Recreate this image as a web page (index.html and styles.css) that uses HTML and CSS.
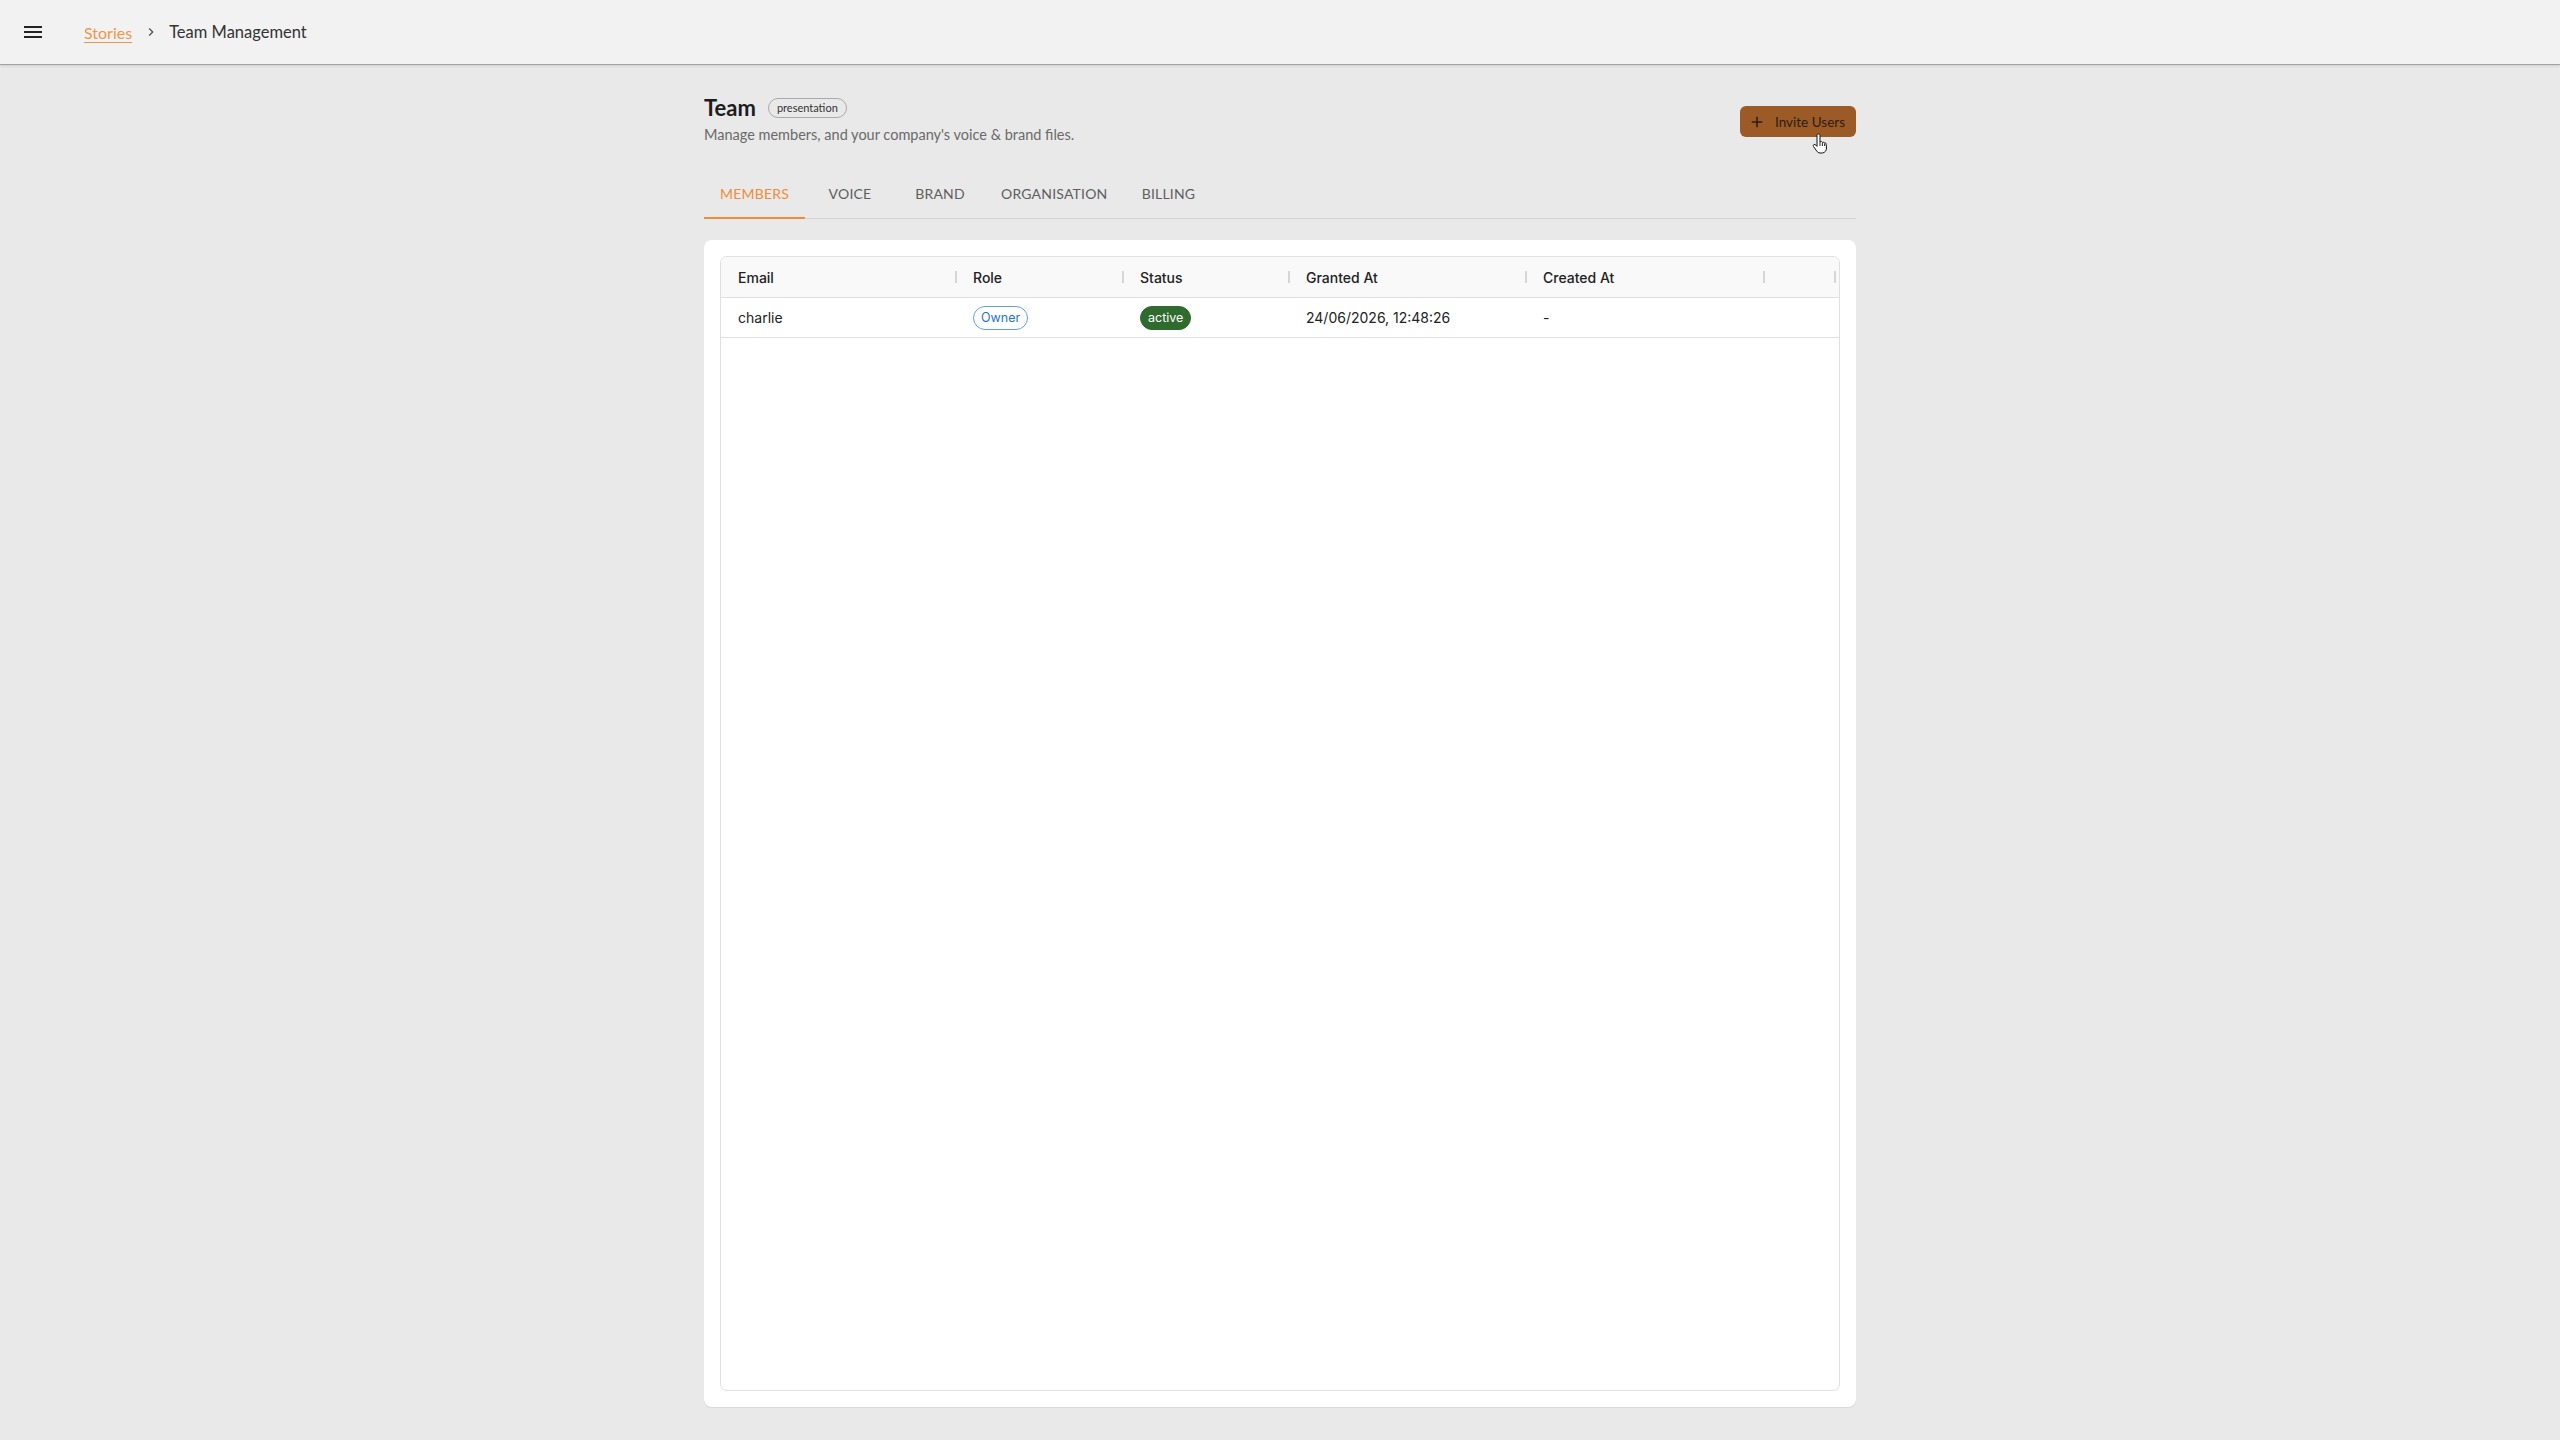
FILE: index.html
```html
<!DOCTYPE html>
<html lang="en">
<head>
<meta charset="utf-8">
<title>Team Management</title>
<link rel="stylesheet" href="styles.css">
</head>
<body>
<header class="topbar">
  <button class="menu-btn" aria-label="menu">
    <svg viewBox="0 0 24 24" width="24" height="24"><path d="M3 18h18v-2H3v2zm0-5h18v-2H3v2zm0-7v2h18V6H3z" fill="#222"/></svg>
  </button>
  <nav class="crumbs">
    <a class="crumb-link" href="#">Stories</a>
    <svg class="crumb-sep" viewBox="0 0 24 24" width="16" height="16"><path d="M10 6 8.59 7.41 13.17 12l-4.58 4.59L10 18l6-6z" fill="#555"/></svg>
    <span class="crumb-current">Team Management</span>
  </nav>
</header>
<main class="page">
  <div class="container">
    <div class="page-head">
      <div class="head-text">
        <div class="title-row">
          <h1 class="title">Team</h1>
          <span class="badge">presentation</span>
        </div>
        <p class="subtitle">Manage members, and your company's voice &amp; brand files.</p>
      </div>
      <button class="invite-btn">
        <svg viewBox="0 0 24 24" width="18" height="18"><path d="M19 13h-6v6h-2v-6H5v-2h6V5h2v6h6v2z" fill="#2b1d12"/></svg>
        <span>Invite Users</span>
      </button>
    </div>
    <div class="tabs">
      <div class="tab tab-active">Members</div>
      <div class="tab">Voice</div>
      <div class="tab">Brand</div>
      <div class="tab">Organisation</div>
      <div class="tab">Billing</div>
    </div>
    <section class="card">
      <div class="grid">
        <div class="grid-head">
          <div class="hcell">Email</div>
          <div class="hcell">Role</div>
          <div class="hcell">Status</div>
          <div class="hcell">Granted At</div>
          <div class="hcell">Created At</div>
          <div class="hcell"></div>
          <div class="hcell hcell-fill"></div>
        </div>
        <div class="grid-row">
          <div class="cell">charlie</div>
          <div class="cell"><span class="chip chip-outline">Owner</span></div>
          <div class="cell"><span class="chip chip-green">active</span></div>
          <div class="cell">24/06/2026, 12:48:26</div>
          <div class="cell">-</div>
          <div class="cell"></div>
          <div class="cell"></div>
        </div>
      </div>
    </section>
  </div>
</main>
<svg class="cursor" viewBox="0 0 17 22" width="17" height="22">
  <path d="M6.5 1C7.3 1 8 1.6 8 2.5V9l.5-.4c.7-.4 1.5-.1 1.7.6l.3.3c.6-.5 1.5-.3 1.8.4.6-.4 1.5-.1 1.7.7l.5 4.4c0 2.5-1.5 4.5-4 5H8c-1.5 0-2.5-1-3.3-2L1.5 13.5c-.5-.8-.2-1.7.5-2 .6-.3 1.3-.1 1.8.5L5 13.4V2.5C5 1.6 5.7 1 6.5 1z" fill="#fff" stroke="#111" stroke-width="1" stroke-linejoin="round"/>
  <path d="M8 9v4M10.4 9.8V13M12.6 10.4V13" stroke="#111" stroke-width=".9" fill="none"/>
</svg>
</body>
</html>
```
FILE: styles.css
```css
* { box-sizing: border-box; }

html, body {
  margin: 0;
  height: 100%;
}

body {
  display: flex;
  flex-direction: column;
  background: #e9e9e9;
  font-family: "Lato", "Open Sans", sans-serif;
  color: #222;
}

.topbar {
  flex: none;
  height: 64px;
  display: flex;
  align-items: center;
  padding-left: 13px;
  background: #f2f2f2;
  box-shadow: 0 1px 0 #a3a3a3, 0 2px 3px rgba(0,0,0,0.12);
  position: relative;
  z-index: 2;
}

.menu-btn {
  width: 40px;
  height: 40px;
  padding: 8px;
  margin: 0;
  border: 0;
  background: transparent;
  display: flex;
  align-items: center;
  justify-content: center;
}

.crumbs {
  margin-left: 31px;
  display: flex;
  align-items: center;
  font-size: 16px;
}

.crumb-link {
  color: #f0954a;
  text-decoration: underline;
  text-decoration-thickness: 1px;
  text-underline-offset: 3px;
}

.crumb-sep {
  margin: 0 10px 0 11px;
}

.crumb-current {
  color: #333;
  font-size: 16.5px;
}

.page {
  flex: 1;
  display: flex;
  min-height: 0;
}

.container {
  width: 1152px;
  margin: 0 auto;
  display: flex;
  flex-direction: column;
  padding: 30px 0 33px;
}

.page-head {
  display: flex;
  justify-content: space-between;
  align-items: flex-start;
}

.title-row {
  display: flex;
  align-items: center;
  gap: 12px;
  height: 28px;
}

.title {
  margin: 0;
  font-size: 22px;
  line-height: 28px;
  font-weight: 700;
  color: #1d1d1d;
}

.badge {
  height: 20px;
  line-height: 18px;
  padding: 0 8px;
  border: 1px solid #a9a9a9;
  border-radius: 10px;
  font-size: 11px;
  color: #333;
}

.subtitle {
  margin: 3px 0 0;
  font-size: 14.5px;
  line-height: 20px;
  color: #6a6a6a;
}

.invite-btn {
  margin-top: 12px;
  height: 31px;
  display: flex;
  align-items: center;
  gap: 9px;
  padding: 0 11px 0 8px;
  border: 0;
  border-radius: 6px;
  background: #9b5a26;
  color: #2b1d12;
  font-family: "Lato", sans-serif;
  font-size: 13.5px;
}

.tabs {
  margin-top: 26px;
  height: 48px;
  display: flex;
  box-shadow: inset 0 -1px 0 #d2d2d2;
}

.tab {
  position: relative;
  min-width: 90px;
  padding: 0 16px 4px;
  display: flex;
  align-items: center;
  justify-content: center;
  text-transform: uppercase;
  font-size: 14px;
  letter-spacing: 0.2px;
  color: #5e5e5e;
}

.tab-active {
  color: #f28c3a;
}

.tab-active::after {
  content: "";
  position: absolute;
  left: 0;
  right: 0;
  bottom: 0;
  height: 2px;
  background: #f28c3a;
}

.card {
  margin-top: 21px;
  flex: 1;
  display: flex;
  flex-direction: column;
  padding: 16px;
  background: #fff;
  border-radius: 8px;
  box-shadow: 0 1px 1px rgba(0,0,0,0.07);
}

.grid {
  flex: 1;
  border: 1px solid #e0e0e0;
  border-radius: 7px;
  overflow: hidden;
  font-family: "Inter", "Roboto", sans-serif;
  font-size: 14px;
  color: #222;
}

.grid-head,
.grid-row {
  display: grid;
  grid-template-columns: 235px 167px 166px 237px 238px 71px 1fr;
  border-bottom: 1px solid #e0e0e0;
}

.grid-head {
  height: 41px;
  background: #f9f9f9;
  font-weight: 500;
}

.grid-row {
  height: 40px;
}

.hcell,
.cell {
  position: relative;
  display: flex;
  align-items: center;
  padding-left: 17px;
  white-space: nowrap;
}

.hcell::after {
  content: "";
  position: absolute;
  right: -1px;
  top: 14px;
  width: 2px;
  height: 12px;
  background: #d6d6d6;
}

.hcell-fill::after {
  display: none;
}

.chip {
  height: 24px;
  line-height: 22px;
  border-radius: 12px;
  font-size: 12.5px;
  padding: 0 7px;
}

.chip-outline {
  border: 1px solid #64a0e0;
  color: #1f74cc;
}

.chip-green {
  border: 1px solid #2f6b2f;
  background: #2f6b2f;
  color: #fff;
  padding: 0 7px;
}

.cursor {
  position: absolute;
  left: 1812px;
  top: 133px;
}
```
